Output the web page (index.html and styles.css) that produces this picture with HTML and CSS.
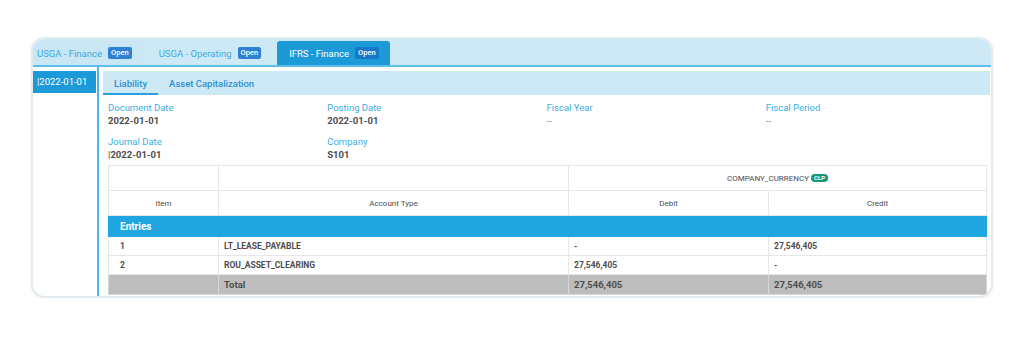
FILE: index.html
```html
<!DOCTYPE html>
<html lang="en">
<head>
    <meta charset="UTF-8">
    <meta name="viewport" content="width=device-width, initial-scale=1.0">
    <title>Journal Entry</title>
    <link rel="stylesheet" href="styles.css">
</head>
<body>
    <div class="page">
        <div class="card">

            <div class="book-tabs">
                <div class="book-tab first">USGA - Finance <span class="badge">Open</span></div>
                <div class="book-tab">USGA - Operating <span class="badge">Open</span></div>
                <div class="book-tab active">IFRS - Finance <span class="badge">Open</span></div>
            </div>

            <div class="card-body">
                <div class="sidebar">
                    <div class="date-item">|2022-01-01</div>
                </div>

                <div class="content">
                    <div class="sub-tabs">
                        <div class="sub-tab active">Liability</div>
                        <div class="sub-tab">Asset Capitalization</div>
                    </div>

                    <div class="fields">
                        <div class="field">
                            <div class="label">Document Date</div>
                            <div class="value">2022-01-01</div>
                        </div>
                        <div class="field">
                            <div class="label">Posting Date</div>
                            <div class="value">2022-01-01</div>
                        </div>
                        <div class="field">
                            <div class="label">Fiscal Year</div>
                            <div class="value empty">--</div>
                        </div>
                        <div class="field">
                            <div class="label">Fiscal Period</div>
                            <div class="value empty">--</div>
                        </div>
                        <div class="field">
                            <div class="label">Journal Date</div>
                            <div class="value">|2022-01-01</div>
                        </div>
                        <div class="field">
                            <div class="label">Company</div>
                            <div class="value">S101</div>
                        </div>
                    </div>

                    <table class="entries">
                        <colgroup>
                            <col class="col-item">
                            <col class="col-type">
                            <col class="col-debit">
                            <col class="col-credit">
                        </colgroup>
                        <thead>
                            <tr class="head-top">
                                <th></th>
                                <th></th>
                                <th colspan="2">COMPANY_CURRENCY <span class="currency">CLP</span></th>
                            </tr>
                            <tr class="head-cols">
                                <th>Item</th>
                                <th>Account Type</th>
                                <th>Debit</th>
                                <th>Credit</th>
                            </tr>
                        </thead>
                        <tbody>
                            <tr class="group-row">
                                <td colspan="4">Entries</td>
                            </tr>
                            <tr class="row-one">
                                <td>1</td>
                                <td>LT_LEASE_PAYABLE</td>
                                <td>-</td>
                                <td>27,546,405</td>
                            </tr>
                            <tr class="row-two">
                                <td>2</td>
                                <td>ROU_ASSET_CLEARING</td>
                                <td>27,546,405</td>
                                <td>-</td>
                            </tr>
                            <tr class="total-row">
                                <td></td>
                                <td>Total</td>
                                <td>27,546,405</td>
                                <td>27,546,405</td>
                            </tr>
                        </tbody>
                    </table>
                </div>
            </div>

        </div>
    </div>
</body>
</html>
```

FILE: styles.css
```css
body {
    margin: 0;
    font-family: Roboto, "Liberation Sans", sans-serif;
    background: #fff;
}

.page {
    padding: 37px 31px 0 31px;
}

.card {
    height: 261px;
    box-sizing: border-box;
    border: 2px solid #e2ecf0;
    border-radius: 14px;
    overflow: hidden;
    background: #fff;
    box-shadow: 0 1px 3px rgba(120, 150, 165, 0.15);
}

/* book tabs */
.book-tabs {
    display: flex;
    align-items: flex-end;
    height: 26px;
    background: #cde9f6;
    border-bottom: 2px solid #5cc0ea;
}

.book-tab {
    display: flex;
    align-items: center;
    gap: 6px;
    height: 24px;
    padding: 0 12px;
    margin-right: 4px;
    font-size: 9.5px;
    color: #41a9e0;
    border-radius: 3px 3px 0 0;
}

.book-tab.first {
    padding-left: 4px;
    padding-right: 11px;
    background: #c8e6f4;
}

.book-tab.active {
    padding-right: 11px;
    background: #1c9ad7;
    color: #fff;
}

.badge {
    display: inline-block;
    height: 12px;
    line-height: 12px;
    padding: 0 3px;
    border-radius: 2px;
    background: #2f7fd2;
    color: #fff;
    font-size: 7.5px;
    font-weight: 500;
}

.book-tab.active .badge {
    background: #1677c9;
}

/* body */
.card-body {
    display: flex;
    height: 229px;
}

.sidebar {
    width: 63px;
    padding: 4px 1px 0 0;
    border-right: 2px solid #4db5e8;
}

.date-item {
    height: 22px;
    line-height: 22px;
    padding-left: 4px;
    background: #1c9ad7;
    color: #fff;
    font-size: 9.5px;
}

.content {
    flex: 1;
    padding: 4px 1px 0 4px;
}

.sub-tabs {
    display: flex;
    height: 24px;
    background: #cde9f6;
}

.sub-tab {
    display: flex;
    align-items: center;
    padding: 0 11px;
    font-size: 9.5px;
    font-weight: 500;
    color: #2c90d3;
    box-sizing: border-box;
}

.sub-tab.active {
    border-bottom: 2px solid #27a0dc;
    padding-top: 2px;
}

/* header fields */
.fields {
    display: grid;
    grid-template-columns: repeat(4, 219.25px);
    row-gap: 7px;
    padding: 6px 0 0 5px;
}

.label {
    font-size: 9.5px;
    line-height: 13px;
    color: #3aaee6;
}

.value {
    font-size: 9.5px;
    line-height: 14px;
    font-weight: 700;
    color: #4d4d4d;
}

.value.empty {
    font-weight: 400;
    color: #888;
}

/* entries table */
.entries {
    width: 878px;
    margin: 3px 0 0 5px;
    border-collapse: collapse;
    table-layout: fixed;
    color: #4d4d4d;
}

.col-item { width: 110px; }
.col-type { width: 350px; }
.col-debit { width: 200px; }
.col-credit { width: 218px; }

.entries th,
.entries td {
    border: 1px solid #e6e6e6;
    padding: 0 5px;
    white-space: nowrap;
}

.entries th {
    font-size: 8px;
    font-weight: 400;
    text-align: center;
}

.head-top th { height: 24px; }
.head-cols th { height: 24px; }

.currency {
    display: inline-block;
    height: 8px;
    line-height: 8px;
    padding: 0 3px;
    border-radius: 5px;
    background: #16977a;
    color: #fff;
    font-size: 6px;
    font-weight: 700;
    vertical-align: 1px;
}

.entries td {
    font-size: 8.5px;
    font-weight: 700;
    text-align: left;
}

.entries td:first-child {
    padding-left: 11px;
}

.group-row td {
    height: 20px;
    background: #1fa6e0;
    border-color: #1fa6e0;
    color: #fff;
    font-size: 10px;
}

.row-one td { height: 18px; }
.row-two td { height: 18px; }

.total-row td {
    height: 19px;
    background: #bdbdbd;
    border-color: #d6d6d6;
    font-size: 9.5px;
}
```
